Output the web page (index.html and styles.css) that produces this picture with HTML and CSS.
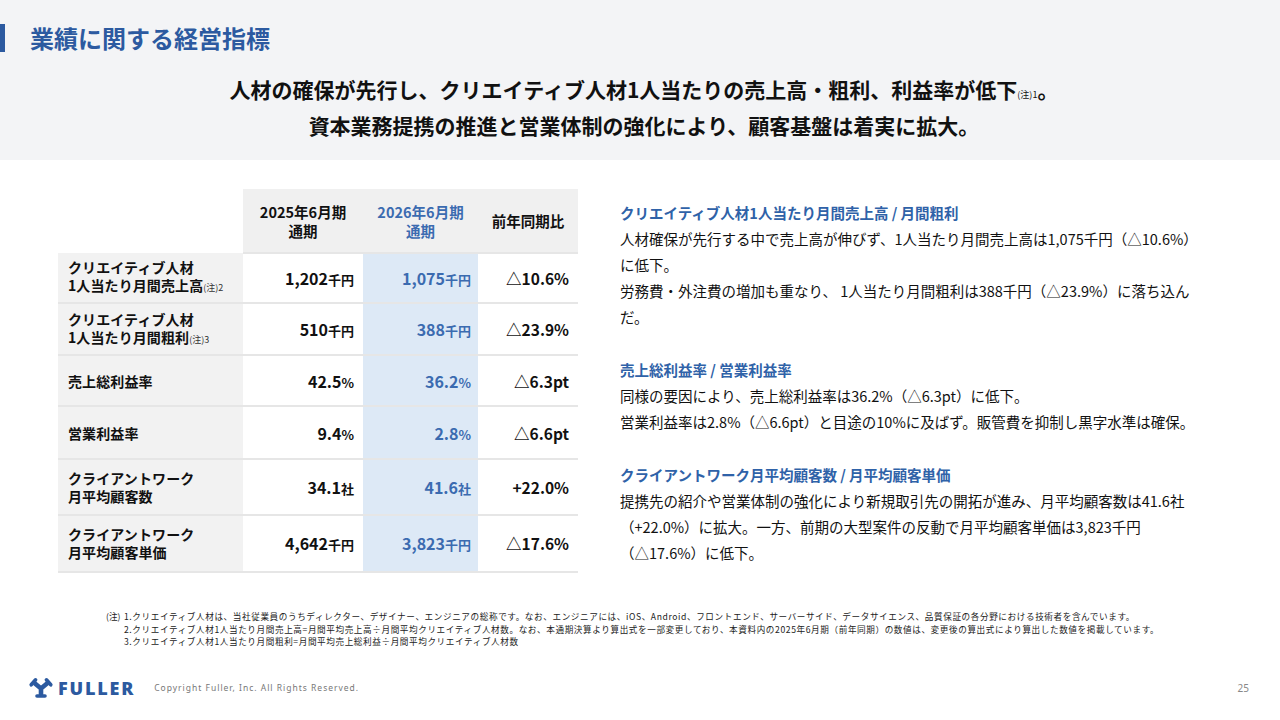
FILE: index.html
```html
<!DOCTYPE html>
<html lang="ja">
<head>
<meta charset="utf-8">
<link rel="stylesheet" href="styles.css">
</head>
<body>
<div class="slide">
  <header class="hero">
    <h1 class="title">業績に関する経営指標</h1>
    <p class="lead">人材の確保が先行し、クリエイティブ人材1人当たりの売上高・粗利、利益率が低下<span class="note-s">(注)1</span>。<br>資本業務提携の推進と営業体制の強化により、顧客基盤は着実に拡大。</p>
  </header>

  <main class="main">
    <table class="kpi">
      <thead>
        <tr>
          <th class="blank"></th>
          <th>2025年6月期<br>通期</th>
          <th class="cur">2026年6月期<br>通期</th>
          <th>前年同期比</th>
        </tr>
      </thead>
      <tbody>
        <tr class="r1">
          <td class="lbl">クリエイティブ人材<br>1人当たり月間売上高<span class="note-t">(注)2</span></td>
          <td class="val">1,202<span class="u">千円</span></td>
          <td class="val cur">1,075<span class="u">千円</span></td>
          <td class="val yoy">△10.6%</td>
        </tr>
        <tr class="r2">
          <td class="lbl">クリエイティブ人材<br>1人当たり月間粗利<span class="note-t">(注)3</span></td>
          <td class="val">510<span class="u">千円</span></td>
          <td class="val cur">388<span class="u">千円</span></td>
          <td class="val yoy">△23.9%</td>
        </tr>
        <tr class="r3">
          <td class="lbl">売上総利益率</td>
          <td class="val">42.5<span class="u">%</span></td>
          <td class="val cur">36.2<span class="u">%</span></td>
          <td class="val yoy">△6.3pt</td>
        </tr>
        <tr class="r4">
          <td class="lbl">営業利益率</td>
          <td class="val">9.4<span class="u">%</span></td>
          <td class="val cur">2.8<span class="u">%</span></td>
          <td class="val yoy">△6.6pt</td>
        </tr>
        <tr class="r5">
          <td class="lbl">クライアントワーク<br>月平均顧客数</td>
          <td class="val">34.1<span class="u">社</span></td>
          <td class="val cur">41.6<span class="u">社</span></td>
          <td class="val yoy">+22.0%</td>
        </tr>
        <tr class="r6">
          <td class="lbl">クライアントワーク<br>月平均顧客単価</td>
          <td class="val">4,642<span class="u">千円</span></td>
          <td class="val cur">3,823<span class="u">千円</span></td>
          <td class="val yoy">△17.6%</td>
        </tr>
      </tbody>
    </table>

    <section class="notes-col">
      <div class="block">
        <h2 class="bh">クリエイティブ人材1人当たり月間売上高 / 月間粗利</h2>
        <p class="bt">人材確保が先行する中で売上高が伸びず、1人当たり月間売上高は1,075千円（△10.6%）<br>に低下。</p>
        <p class="bt">労務費・外注費の増加も重なり、 1人当たり月間粗利は388千円（△23.9%）に落ち込ん<br>だ。</p>
      </div>
      <div class="block">
        <h2 class="bh">売上総利益率 / 営業利益率</h2>
        <p class="bt">同様の要因により、売上総利益率は36.2%（△6.3pt）に低下。</p>
        <p class="bt">営業利益率は2.8%（△6.6pt）と目途の10%に及ばず。販管費を抑制し黒字水準は確保。</p>
      </div>
      <div class="block">
        <h2 class="bh">クライアントワーク月平均顧客数 / 月平均顧客単価</h2>
        <p class="bt">提携先の紹介や営業体制の強化により新規取引先の開拓が進み、月平均顧客数は41.6社<br>（+22.0%）に拡大。一方、前期の大型案件の反動で月平均顧客単価は3,823千円<br>（△17.6%）に低下。</p>
      </div>
    </section>
  </main>

  <div class="footnotes">
    <span class="fn-label">(注)</span>
    <div class="fn-lines">
      <div>1.クリエイティブ人材は、当社従業員のうちディレクター、デザイナー、エンジニアの総称です。なお、エンジニアには、iOS、Android、フロントエンド、サーバーサイド、データサイエンス、品質保証の各分野における技術者を含んでいます。</div>
      <div>2.クリエイティブ人材1人当たり月間売上高=月間平均売上高÷月間平均クリエイティブ人材数。なお、本通期決算より算出式を一部変更しており、本資料内の2025年6月期（前年同期）の数値は、変更後の算出式により算出した数値を掲載しています。</div>
      <div>3.クリエイティブ人材1人当たり月間粗利=月間平均売上総利益÷月間平均クリエイティブ人材数</div>
    </div>
  </div>

  <footer class="footer">
    <div class="logo">
      <svg class="mark" viewBox="0 0 26 22" width="26" height="22" aria-hidden="true">
        <g fill="none" stroke="#2c5aa0" stroke-linecap="round" stroke-linejoin="round">
          <path d="M13 11.5 L7 6.5 M13 11.5 L19 6.5 M13 11.5 L13 17.5" stroke-width="4.6"/>
          <path d="M3.2 7.8 L7.6 2.8 M22.8 7.8 L18.4 2.8 M9 19 L17 19" stroke-width="3.6"/>
        </g>
      </svg>
      <span class="brand">FULLER</span>
    </div>
    <span class="copy">Copyright Fuller, Inc. All Rights Reserved.</span>
    <span class="page">25</span>
  </footer>
</div>
</body>
</html>
```

FILE: styles.css
```css
* { box-sizing: border-box; }
html, body { margin: 0; padding: 0; }
body {
  width: 1280px;
  height: 720px;
  overflow: hidden;
  background: #ffffff;
  font-family: "Noto Sans CJK JP", "Noto Sans", sans-serif;
  color: #111111;
}
.slide { width: 1280px; height: 720px; display: flex; flex-direction: column; }

.hero {
  height: 160px;
  background: #f3f4f6;
  padding-top: 24px;
}
.title {
  margin: 0;
  border-left: 5px solid #2c5aa0;
  padding-left: 25px;
  font-size: 24px;
  line-height: 28px;
  font-weight: 700;
  color: #2c5aa0;
}
.lead {
  margin: 22px 0 0;
  padding-left: 8px;
  text-align: center;
  font-size: 21px;
  line-height: 31px;
  font-weight: 700;
  color: #111;
}
.note-s { font-size: 9px; font-weight: 400; }

.main {
  height: 450px;
  display: flex;
  padding: 29px 0 0 58px;
  gap: 42px;
}

.kpi {
  border-collapse: collapse;
  table-layout: fixed;
  width: 520px;
  height: 384px;
  align-self: flex-start;
}
.kpi th {
  background: #f0f0f0;
  height: 64px;
  font-size: 14.5px;
  line-height: 19px;
  font-weight: 700;
  text-align: center;
  border-bottom: 2px solid #e6e6e6;
}
.kpi th.blank { background: #ffffff; width: 185px; border-bottom: 0; }
.kpi th:nth-child(2) { width: 120px; }
.kpi th:nth-child(3) { width: 115px; }
.kpi th:nth-child(4) { width: 100px; }
.kpi th.cur { color: #3b6bb0; }

.kpi td { border-bottom: 2px solid #e6e6e6; padding: 0; vertical-align: middle; }
.kpi tr.r1 td { height: 50px; }
.kpi tr.r2 td { height: 52px; }
.kpi tr.r3 td { height: 51px; }
.kpi tr.r4 td { height: 52px; }
.kpi tr.r5 td { height: 56px; }
.kpi tr.r6 td { height: 57px; }

.kpi td.lbl {
  background: #f2f2f2;
  padding-left: 10px;
  font-size: 14px;
  line-height: 18px;
  font-weight: 700;
  letter-spacing: 0.1px;
  white-space: nowrap;
}
.note-t { font-size: 9px; font-weight: 400; color: #333; letter-spacing: 0; }
.kpi td.val {
  text-align: right;
  padding-right: 9px;
  font-size: 16px;
  font-weight: 700;
}
.kpi td.val .u { font-size: 13px; }
.kpi td.cur { background: #dde9f6; color: #3b6bb0; padding-right: 7px; }
.kpi td.yoy { font-size: 15.5px; }

.notes-col { padding-top: 11px; width: 610px; white-space: nowrap; }
.block + .block { margin-top: 27px; }
.bh {
  margin: 0;
  font-size: 14.5px;
  line-height: 26px;
  font-weight: 700;
  color: #2f62a8;
}
.bt {
  margin: 0;
  font-size: 14.5px;
  line-height: 26px;
  font-weight: 400;
  color: #111;
}

.footnotes {
  display: flex;
  padding-left: 106px;
  font-size: 8.6px;
  letter-spacing: 0.6px;
  line-height: 12.5px;
  color: #222;
  white-space: nowrap;
}
.fn-label { width: 18px; letter-spacing: 0; }

.footer {
  margin-top: 28px;
  height: 24px;
  display: flex;
  align-items: center;
  padding: 0 31px 0 28px;
}
.logo { display: flex; align-items: center; gap: 4px; }
.mark { display: block; }
.brand {
  font-family: "Noto Sans", "Liberation Sans", sans-serif;
  font-size: 18px;
  font-weight: 900;
  letter-spacing: 1.8px;
  color: #2c5aa0;
}
.copy {
  margin-left: 19px;
  font-family: "Noto Sans", "Liberation Sans", sans-serif;
  font-size: 8.5px;
  letter-spacing: 1px;
  color: #777;
}
.page {
  margin-left: auto;
  font-family: "Noto Sans", "Liberation Sans", sans-serif;
  font-size: 10px;
  color: #888;
}
```
